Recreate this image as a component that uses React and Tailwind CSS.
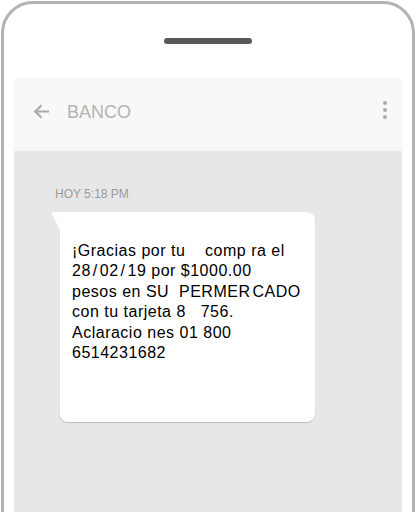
export default function App() {
  const S = ({ c }) => <span className="mx-[2px]">{c}</span>;
  const lines = [
    "¡Gracias por tu    comp ra el",
    <>28<S c="/" />02<S c="/" />19 por $1000.00</>,
    <>pesos en SU  PERMER<span className="ml-[2px]">CADO</span></>,
    "con tu tarjeta 8   756.",
    "Aclaracio nes 01 800",
    "6514231682",
  ];
  return (
    <div className="w-[417px] h-[512px] bg-white overflow-hidden" style={{ fontFamily: '"Liberation Sans", Arial, sans-serif' }}>
      <div className="ml-[1px] mt-[1px] w-[414px] h-[540px] border-[3px] border-[#b3b3b3] rounded-t-[32px] px-[10px] flex flex-col">
        <div className="h-[74px] flex justify-center">
          <div className="mt-[34px] w-[88px] h-[6px] rounded-full bg-[#585858]" />
        </div>
        <div className="flex-1 flex flex-col">
          <div className="h-[73px] bg-[#f8f8f8] flex items-center pl-[19px] pr-[15px] pb-[6px]">
            <svg width="17" height="15" viewBox="0 0 17 15" className="shrink-0">
              <path d="M16 7.5H2.5M8.5 1.3L2.3 7.5L8.5 13.7" stroke="#ababab" strokeWidth="2.2" fill="none" />
            </svg>
            <span className="ml-[17px] text-[18px] leading-none text-[#b3b3b3]">BANCO</span>
            <div className="ml-auto -mt-[3px] flex flex-col gap-[2.5px]">
              <div className="w-[4.5px] h-[4.5px] rounded-full bg-[#aaaaaa]" />
              <div className="w-[4.5px] h-[4.5px] rounded-full bg-[#aaaaaa]" />
              <div className="w-[4.5px] h-[4.5px] rounded-full bg-[#aaaaaa]" />
            </div>
          </div>
          <div className="flex-1 bg-[#e7e7e7] pt-[35px] pl-[41px]">
            <div className="text-[12px] leading-[16px] text-[#9a9a9a]">HOY 5:18 PM</div>
            <div className="relative mt-[10px] ml-[5px] w-[255px] h-[210px] bg-white rounded-tr-[8px] rounded-b-[8px] shadow-[0_1px_1px_rgba(0,0,0,0.18)] pt-[29px] pl-[12px]">
              <svg width="10" height="20" viewBox="0 0 10 20" className="absolute left-[-9px] top-0">
                <polygon points="0,0 10,0 10,20" fill="white" />
              </svg>
              {lines.map((l, i) => (
                <div key={i} className="whitespace-pre text-[16px] leading-[20.4px] text-black tracking-[0.5px]">{l}</div>
              ))}
            </div>
          </div>
        </div>
      </div>
    </div>
  );
}
